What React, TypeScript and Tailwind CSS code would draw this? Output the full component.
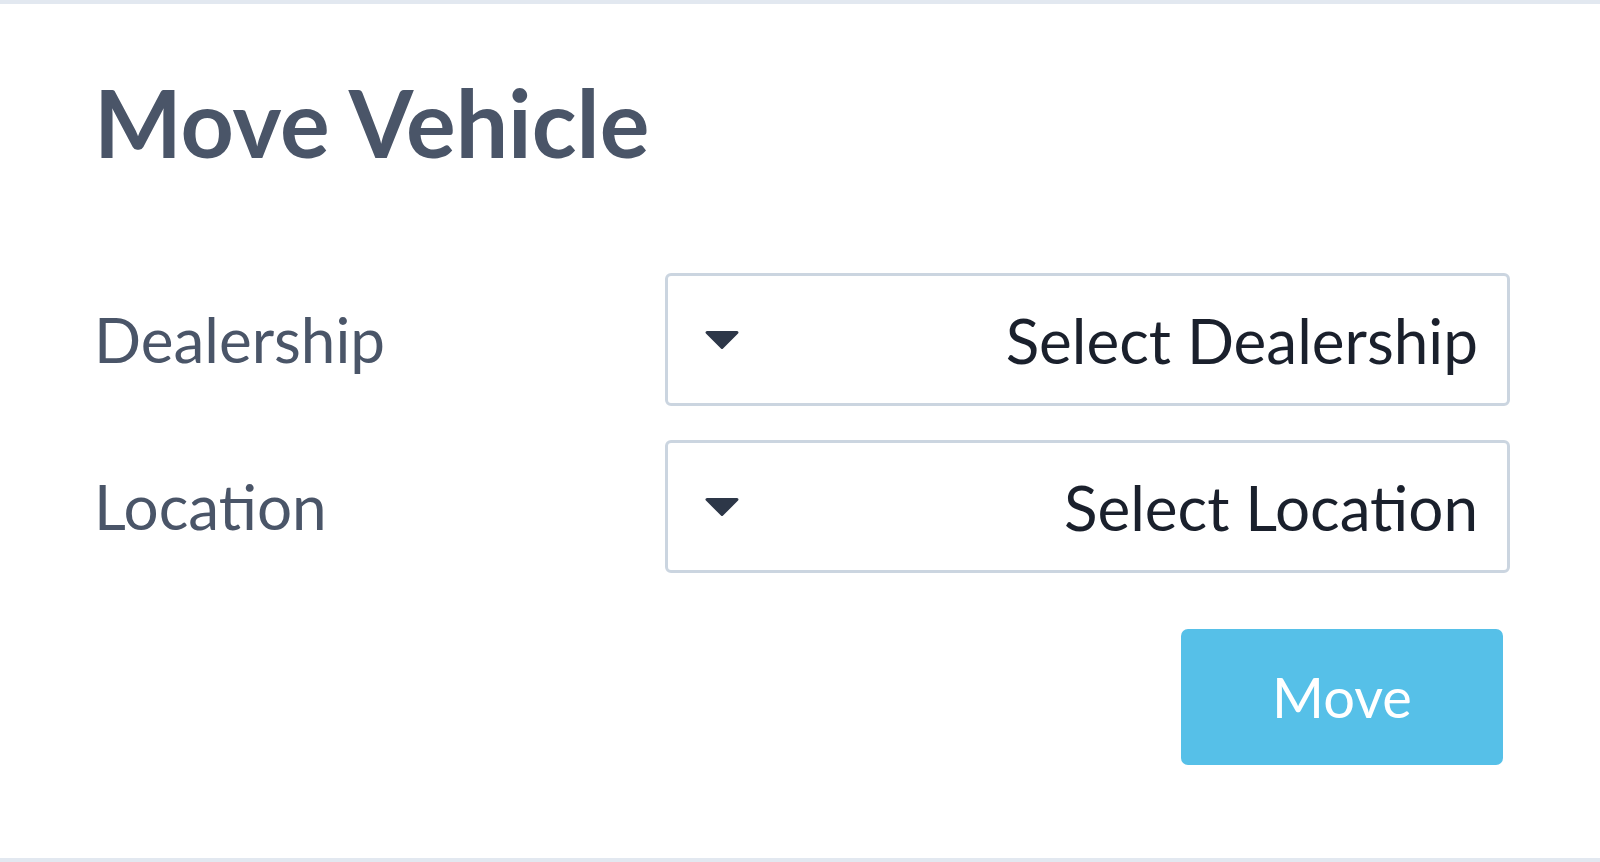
import { useState } from "react";

interface SelectRowProps {
    label: string;
    placeholder: string;
}

function CaretDown() {
    return (
        <svg width="36" height="20" viewBox="0 0 36 20" className="shrink-0">
            <path d="M3 2.5 H33 L18 17.5 Z" fill="#2d3748" stroke="#2d3748" strokeWidth="3" strokeLinejoin="round" />
        </svg>
    );
}

function SelectRow({ label, placeholder }: SelectRowProps) {
    return (
        <div className="flex items-center">
            <label className="w-[571px] shrink-0 text-[62px] text-[#4a5568]">{label}</label>
            <button className="flex-1 h-[133px] flex items-center justify-between border-[3px] border-[#cbd5e0] rounded-[6px] bg-white pl-[36px] pr-[29px]">
                <CaretDown />
                <span className="text-[62px] text-[#1a202c] translate-y-[1px]">{placeholder}</span>
            </button>
        </div>
    );
}

export default function App() {
    const [moved, setMoved] = useState(false);

    return (
        <div className="h-[862px] bg-white border-t-4 border-b-4 border-[#e2e8f0] font-['Lato',sans-serif] pl-[94px] pr-[90px]">
            <h1 className="mt-[72px] mb-[104px] text-[93px] font-bold leading-none text-[#4a5568]">Move Vehicle</h1>

            <div className="flex flex-col gap-[34px]">
                <SelectRow label="Dealership" placeholder="Select Dealership" />
                <SelectRow label="Location" placeholder="Select Location" />
            </div>

            <div className="flex justify-end mt-[56px] pr-[7px]">
                <button
                    onClick={() => setMoved(!moved)}
                    className="w-[322px] h-[136px] rounded-[7px] bg-[#56c0e8] text-white text-[56px]"
                >
                    Move
                </button>
            </div>
        </div>
    );
}
